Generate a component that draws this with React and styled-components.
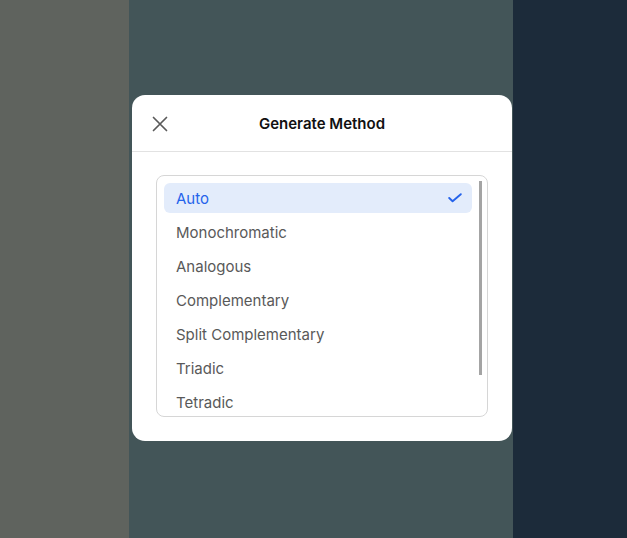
import React, { useState } from "react";
import styled, { createGlobalStyle } from "styled-components";

const Global = createGlobalStyle`
  html, body { margin: 0; padding: 0; }
  body { font-family: Inter, "Noto Sans", sans-serif; -webkit-font-smoothing: antialiased; }
  #root { width: 100vw; height: 100vh; }
`;

const Page = styled.div`
  display: grid;
  grid-template-columns: 129px 384px 1fr;
  width: 100%;
  height: 100vh;
  overflow: hidden;
`;

const Column = styled.div`
  background: ${(p) => p.$bg};
  display: flex;
  align-items: center;
  justify-content: center;
`;

const Modal = styled.div`
  width: 380px;
  height: 346px;
  margin: -2px 0 0 2px;
  background: #ffffff;
  border-radius: 13px;
  display: flex;
  flex-direction: column;
  box-sizing: border-box;
  overflow: hidden;
`;

const Header = styled.div`
  height: 57px;
  flex-shrink: 0;
  display: grid;
  grid-template-columns: 56px 1fr 56px;
  align-items: center;
  border-bottom: 1px solid #e2e2e2;
  box-sizing: border-box;
`;

const CloseButton = styled.button`
  border: 0;
  background: transparent;
  padding: 0;
  margin: 2px 0 0 20px;
  width: 16px;
  height: 16px;
  display: flex;
  align-items: center;
  justify-content: center;
  cursor: pointer;
  color: #5a5a5a;
`;

const Title = styled.h2`
  margin: 0;
  text-align: center;
  font-size: 15px;
  font-weight: 600;
  color: #111111;
  letter-spacing: 0;
`;

const Body = styled.div`
  padding: 23px 24px 24px;
  flex: 1;
  min-height: 0;
  display: flex;
  box-sizing: border-box;
`;

const ListFrame = styled.div`
  flex: 1;
  min-height: 0;
  position: relative;
  border: 1px solid #d6d6d6;
  border-radius: 8px;
  overflow: hidden;
  display: flex;
`;

const List = styled.div`
  flex: 1;
  overflow-y: auto;
  scrollbar-width: none;
  padding: 7px 15px 7px 7px;
  display: flex;
  flex-direction: column;
  gap: 4px;
  box-sizing: border-box;
  &::-webkit-scrollbar { display: none; }
`;

const ScrollThumb = styled.div`
  position: absolute;
  top: 5px;
  right: 5px;
  width: 3px;
  height: 194px;
  background: #a4a4a4;
  pointer-events: none;
`;

const Option = styled.div`
  flex-shrink: 0;
  height: 30px;
  display: flex;
  align-items: center;
  justify-content: space-between;
  padding: 0 10px 0 12px;
  border-radius: 6px;
  font-size: 15px;
  color: ${(p) => (p.$selected ? "#2563eb" : "#595959")};
  background: ${(p) => (p.$selected ? "#e3ecfb" : "transparent")};
  cursor: pointer;
`;

const CloseIcon = () => (
  <svg width="16" height="16" viewBox="0 0 16 16" fill="none">
    <path d="M1.5 1.5 14.5 14.5M14.5 1.5 1.5 14.5" stroke="currentColor" strokeWidth="1.7" strokeLinecap="round" />
  </svg>
);

const CheckIcon = () => (
  <svg width="14" height="10" viewBox="0 0 14 10" fill="none">
    <path d="M1.2 5 4.6 8.3 12.8 1.2" stroke="#2563eb" strokeWidth="1.9" strokeLinecap="round" strokeLinejoin="round" />
  </svg>
);

const methods = [
  "Auto",
  "Monochromatic",
  "Analogous",
  "Complementary",
  "Split Complementary",
  "Triadic",
  "Tetradic",
];

export default function App() {
  const [selected, setSelected] = useState("Auto");
  return (
    <>
      <Global />
      <Page>
        <Column $bg="#5f635e" />
        <Column $bg="#435558">
          <Modal>
            <Header>
              <CloseButton aria-label="Close">
                <CloseIcon />
              </CloseButton>
              <Title>Generate Method</Title>
              <span />
            </Header>
            <Body>
              <ListFrame>
                <List>
                  {methods.map((m) => (
                    <Option key={m} $selected={m === selected} onClick={() => setSelected(m)}>
                      <span>{m}</span>
                      {m === selected && <CheckIcon />}
                    </Option>
                  ))}
                </List>
                <ScrollThumb />
              </ListFrame>
            </Body>
          </Modal>
        </Column>
        <Column $bg="#1c2b3a" />
      </Page>
    </>
  );
}
